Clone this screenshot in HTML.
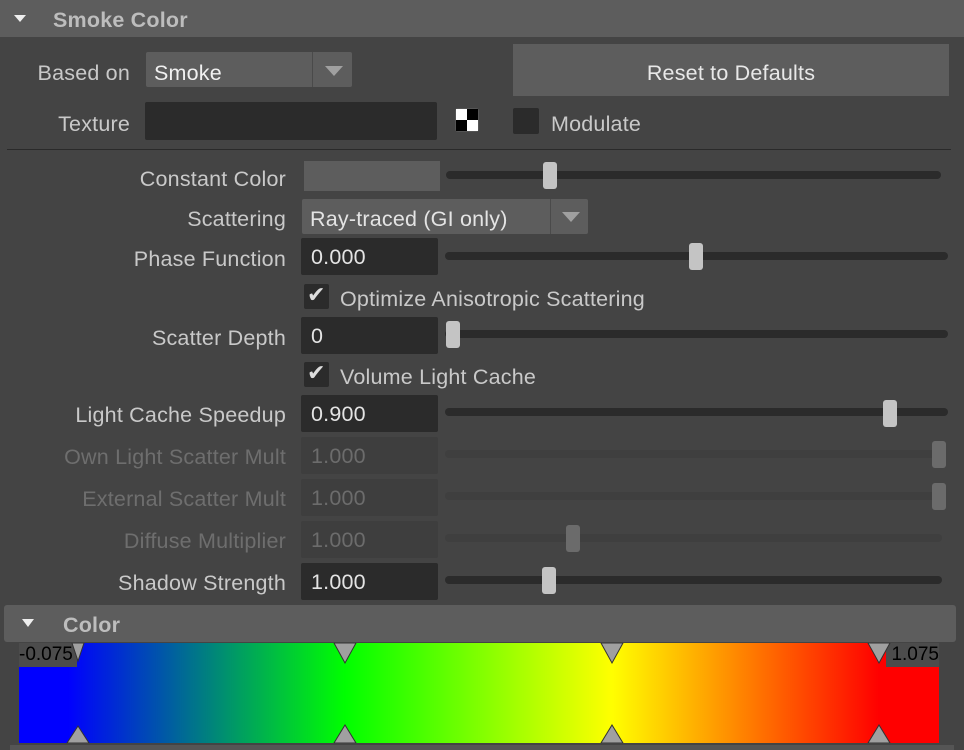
<!DOCTYPE html>
<html><head><style>
*{margin:0;padding:0;box-sizing:border-box}
body{width:964px;height:750px;background:#444;font-family:"Liberation Sans",sans-serif;font-size:21.5px;letter-spacing:0.2px;color:#c9c9c9;position:relative;overflow:hidden}
.a{position:absolute}
.lbl{position:absolute;right:678px;white-space:nowrap;text-align:right;line-height:24px}
.f{position:absolute;left:301px;width:137px;height:37px;background:#2b2b2b;border-radius:2px;color:#e4e4e4;padding-left:10px;line-height:39px}
.fd{background:#3e3e3e;color:#6c6c6c}
.dis{color:#6e6e6e}
.tr{position:absolute;left:445px;width:503px;height:8px;background:#2b2b2b;border-radius:4px}
.trd{background:#3f3f3f}
.th{position:absolute;width:14px;height:27px;background:#c4c4c4;border-radius:3px}
.thd{background:#6b6b6b}
.cb{position:absolute;left:304px;width:25px;height:25px;background:#2b2b2b;border-radius:2px}
.tri{position:absolute;width:0;height:0;border-left:9px solid transparent;border-right:9px solid transparent;border-top:10px solid #a0a0a0}
</style></head><body>
<div class="a" style="left:0;top:0;width:964px;height:37px;background:#5d5d5d"></div>
<div class="a" style="left:14px;top:15px;width:0;height:0;border-left:6px solid transparent;border-right:6px solid transparent;border-top:7px solid #eee"></div>
<div class="a" style="left:53px;top:8px;font-weight:bold;color:#bdbdbd">Smoke Color</div>

<div class="lbl" style="right:834px;top:61px">Based on</div>
<div class="a" style="left:146px;top:52px;width:206px;height:35px;background:#5d5d5d;border-radius:2px"></div>
<div class="a" style="left:312px;top:52px;width:1px;height:35px;background:#4a4a4a"></div>
<div class="a" style="left:154px;top:61px;color:#f0f0f0">Smoke</div>
<div class="tri" style="left:325px;top:66px"></div>
<div class="a" style="left:513px;top:44px;width:436px;height:52px;background:#5d5d5d"></div>
<div class="a" style="left:513px;top:61px;width:436px;text-align:center;color:#e8e8e8">Reset to Defaults</div>

<div class="lbl" style="right:834px;top:112px">Texture</div>
<div class="a" style="left:145px;top:102px;width:292px;height:38px;background:#2b2b2b;border-radius:2px"></div>
<div class="a" style="left:455px;top:108px;width:24px;height:24px;background:#555;border-radius:3px;padding:1px">
<div style="width:22px;height:22px;background:conic-gradient(#000 0 25%,#fff 0 50%,#000 0 75%,#fff 0)"></div></div>
<div class="a" style="left:513px;top:108px;width:26px;height:26px;background:#2b2b2b;border-radius:2px"></div>
<div class="a" style="left:551px;top:112px">Modulate</div>
<div class="a" style="left:7px;top:149px;width:944px;height:1px;background:#2a2a2a"></div>

<div class="lbl" style="top:167px">Constant Color</div>
<div class="a" style="left:304px;top:161px;width:136px;height:30px;background:#5d5d5d"></div>
<div class="tr" style="left:446px;width:495px;top:171px"></div><div class="th" style="left:543px;top:162px"></div>

<div class="lbl" style="top:207px">Scattering</div>
<div class="a" style="left:302px;top:199px;width:286px;height:35px;background:#5d5d5d;border-radius:2px"></div>
<div class="a" style="left:550px;top:199px;width:1px;height:35px;background:#4a4a4a"></div>
<div class="a" style="left:310px;top:207px;color:#e4e4e4">Ray-traced (GI only)</div>
<div class="tri" style="left:562px;top:212px"></div>

<div class="lbl" style="top:247px">Phase Function</div>
<div class="f" style="top:238px">0.000</div>
<div class="tr" style="top:252px"></div><div class="th" style="left:689px;top:243px"></div>

<div class="cb" style="top:284px"></div>
<div class="a" style="left:307px;top:282px;color:#ddd;font-size:22px">✔</div>
<div class="a" style="left:340px;top:287px">Optimize Anisotropic Scattering</div>

<div class="lbl" style="top:326px">Scatter Depth</div>
<div class="f" style="top:317px">0</div>
<div class="tr" style="top:330px"></div><div class="th" style="left:446px;top:321px"></div>

<div class="cb" style="top:362px"></div>
<div class="a" style="left:307px;top:360px;color:#ddd;font-size:22px">✔</div>
<div class="a" style="left:340px;top:365px">Volume Light Cache</div>

<div class="lbl" style="top:403px">Light Cache Speedup</div>
<div class="f" style="top:395px">0.900</div>
<div class="tr" style="top:408px"></div><div class="th" style="left:883px;top:400px"></div>

<div class="lbl dis" style="top:445px">Own Light Scatter Mult</div>
<div class="f fd" style="top:437px">1.000</div>
<div class="tr trd" style="top:450px;width:497px"></div><div class="th thd" style="left:932px;top:441px"></div>

<div class="lbl dis" style="top:487px">External Scatter Mult</div>
<div class="f fd" style="top:479px">1.000</div>
<div class="tr trd" style="top:492px;width:497px"></div><div class="th thd" style="left:932px;top:483px"></div>

<div class="lbl dis" style="top:529px">Diffuse Multiplier</div>
<div class="f fd" style="top:521px">1.000</div>
<div class="tr trd" style="top:534px;width:497px"></div><div class="th thd" style="left:566px;top:525px"></div>

<div class="lbl" style="top:571px">Shadow Strength</div>
<div class="f" style="top:563px">1.000</div>
<div class="tr" style="top:576px;width:497px"></div><div class="th" style="left:542px;top:567px"></div>

<div class="a" style="left:4px;top:605px;width:952px;height:37px;background:#5d5d5d;border-radius:3px"></div>
<div class="a" style="left:22px;top:619px;width:0;height:0;border-left:6px solid transparent;border-right:6px solid transparent;border-top:8px solid #eee"></div>
<div class="a" style="left:63px;top:613px;font-weight:bold;color:#bdbdbd">Color</div>

<div class="a" style="left:10px;top:745px;width:944px;height:5px;background:#555"></div>
<div class="a" style="left:19px;top:643px;width:920px;height:100px;background:linear-gradient(to right,#0000ff 0px,#0000ff 49px,#00ff00 326px,#ffff00 593px,#ff0000 860px,#ff0000 920px)"></div>
<div class="a" style="left:19px;top:643px;width:58px;height:24px;background:#4c4c4c;color:#000;font-size:19px;letter-spacing:0;line-height:24px">-0.075</div>
<div class="a" style="left:886px;top:643px;width:53px;height:24px;background:#4c4c4c;color:#000;font-size:19px;letter-spacing:0;line-height:24px;text-align:right">1.075</div>
<svg class="a" style="left:0;top:643px" width="964" height="100">
<g fill="#a0a0a0" stroke="#333" stroke-width="1">
<polygon points="78,0 72,0 78,18 84,0"/>
<polygon points="334,0 356,0 345,20"/>
<polygon points="601,0 623,0 612,20"/>
<polygon points="868,0 890,0 879,20"/>
<polygon points="67,100 89,100 78,83"/>
<polygon points="334,100 356,100 345,82"/>
<polygon points="601,100 623,100 612,82"/>
<polygon points="868,100 890,100 879,82"/>
</g></svg>
</body></html>
